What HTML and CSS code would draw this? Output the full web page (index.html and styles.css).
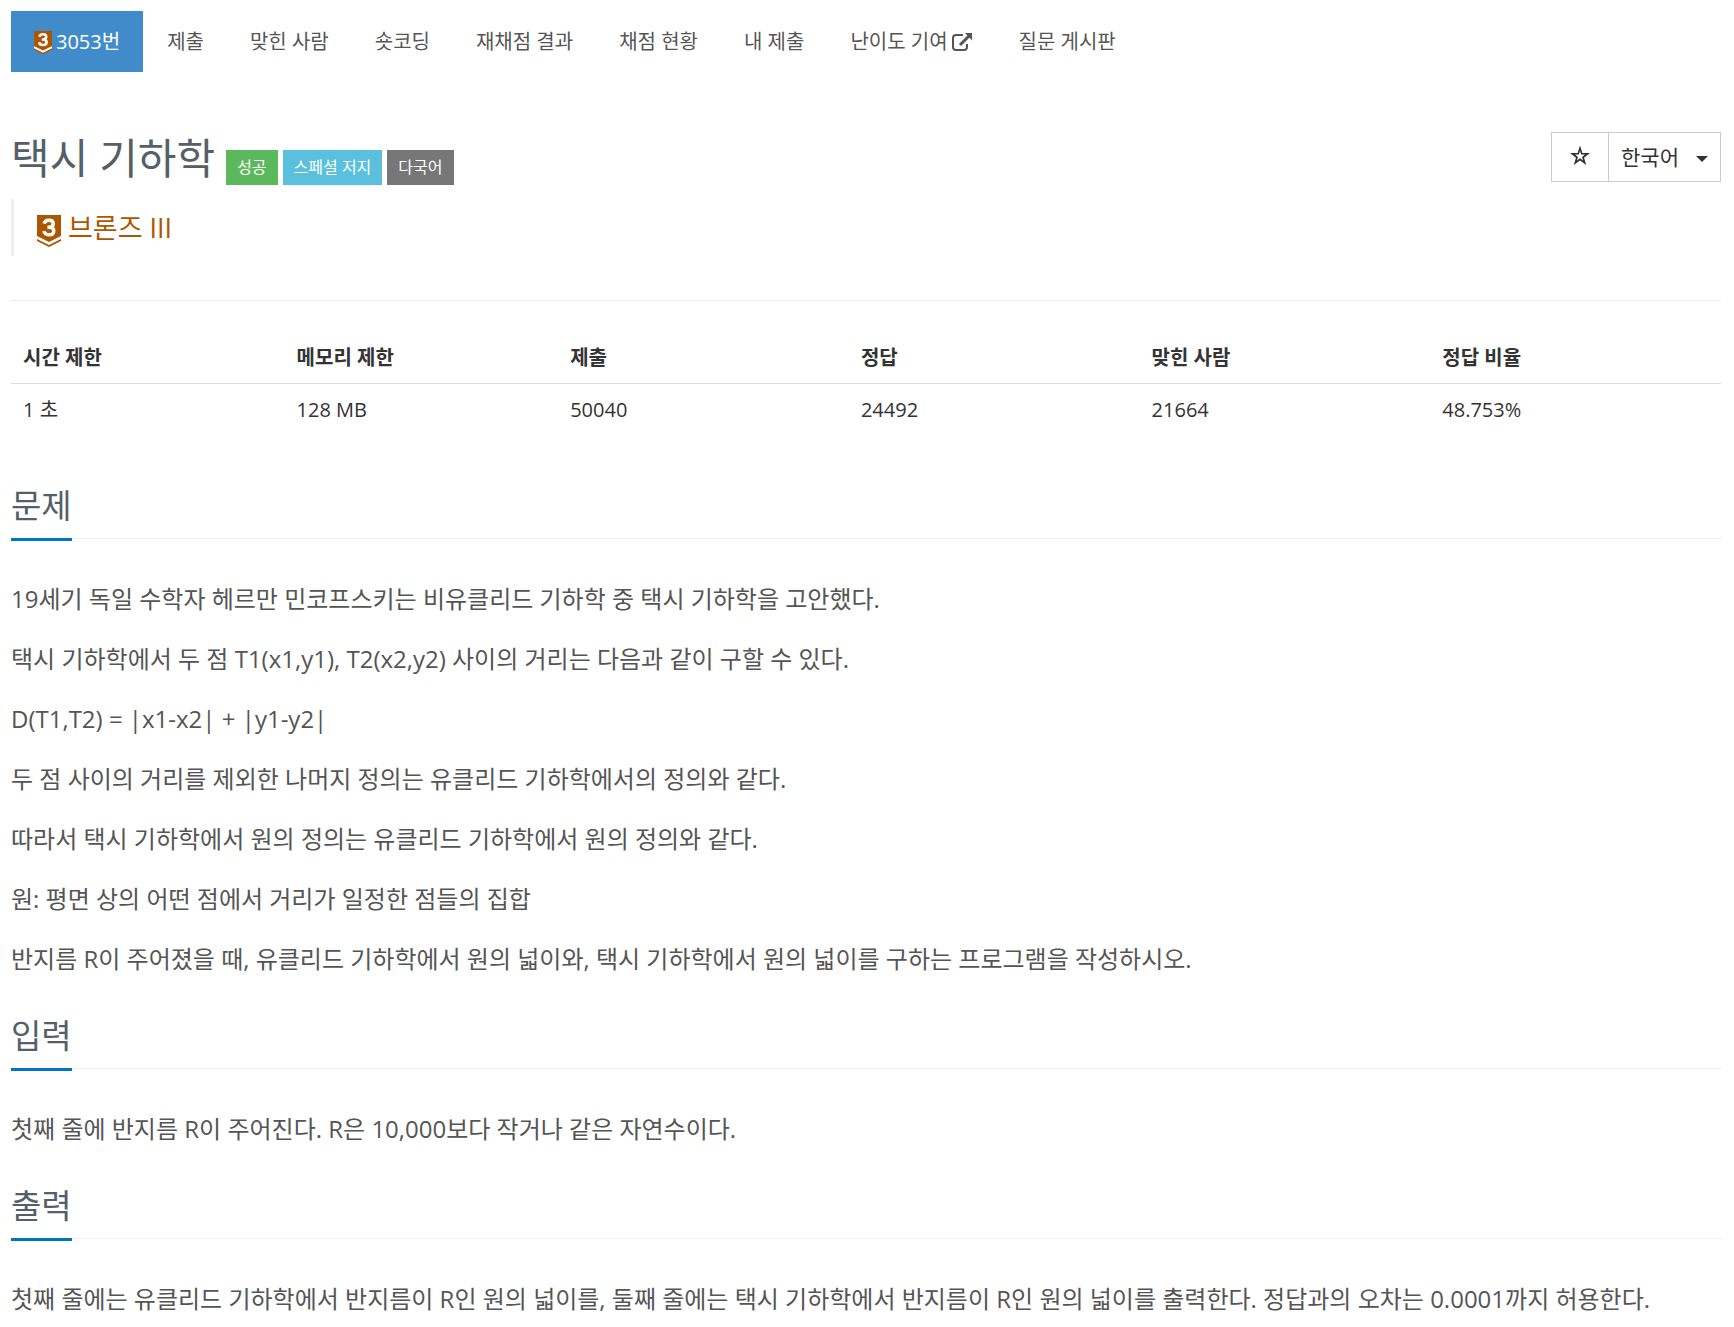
FILE: index.html
```html
<!DOCTYPE html>
<html lang="ko">
<head>
	<meta charset="utf-8">
	<title>3053번: 택시 기하학</title>
	<link rel="stylesheet" href="styles.css">
</head>
<body>
	<svg class="defs" width="0" height="0">
		<symbol id="tier" viewBox="0 0 24 32">
			<path fill="#ad5600" d="M0 0H24V21L12 27L0 21Z"/>
			<path fill="#ad5600" d="M0 24L12 30L24 24V26L12 32L0 26Z"/>
			<path fill="none" stroke="#fff" stroke-width="3.400" d="M7.200 8.600C7.600 6.300 9.500 5.300 12 5.300C14.700 5.300 16.300 6.600 16.300 8.800C16.300 11 14.600 12.200 12.200 12.200H10.400M12.200 12.200C15 12.200 16.800 13.400 16.800 15.900C16.800 18.300 14.800 19.700 12 19.700C9.200 19.700 7.300 18.500 6.900 16"/>
		</symbol>
		<symbol id="tier-filled" viewBox="0 0 24 32">
			<path fill="#ad5600" d="M0 0H24V25L12 31L0 25Z"/>
			<path fill="none" stroke="#fff" stroke-width="2.500" d="M0 21.500L12 27.500L24 21.500"/>
			<path fill="none" stroke="#fff" stroke-width="3.400" d="M7.200 7.600C7.600 5.300 9.500 4.300 12 4.300C14.700 4.300 16.300 5.600 16.300 7.800C16.300 10 14.600 11.200 12.200 11.200H10.400M12.200 11.200C15 11.200 16.800 12.400 16.800 14.900C16.800 17.300 14.800 18.700 12 18.700C9.200 18.700 7.300 17.500 6.900 15"/>
		</symbol>
	</svg>
	<nav>
		<ul class="problem-menu">
			<li class="active"><a href="#"><svg class="tier-small"><use href="#tier-filled"/></svg>3053번</a></li>
			<li><a href="#">제출</a></li>
			<li><a href="#">맞힌 사람</a></li>
			<li><a href="#">숏코딩</a></li>
			<li><a href="#">재채점 결과</a></li>
			<li><a href="#">채점 현황</a></li>
			<li><a href="#">내 제출</a></li>
			<li><a href="#">난이도 기여<svg class="external" viewBox="0 0 21 18"><path fill="none" stroke="currentColor" stroke-width="2" d="M11 2H4Q1 2 1 5V14Q1 17 4 17H12Q15 17 15 14V11"/><path fill="none" stroke="currentColor" stroke-width="3" d="M8 12L17 3"/><path fill="currentColor" d="M13 0H20V7.500Z"/></svg></a></li>
			<li><a href="#">질문 게시판</a></li>
		</ul>
	</nav>
	<header class="page-header">
		<div class="title">
			<h1>택시 기하학</h1>
			<span class="label success">성공</span>
			<span class="label info">스페셜 저지</span>
			<span class="label default">다국어</span>
		</div>
		<div class="btn-group">
			<button class="btn" aria-label="즐겨찾기"><svg class="star" viewBox="0 0 22 22"><path fill="#333" fill-rule="evenodd" d="M11 .5L13.400 8H21L15 12.700L17.300 20L11 15.600L4.700 20L7 12.700L1 8H8.600ZM11 5.800L9.900 9.600H6L9 11.900L7.900 15.400L11 13.300L14.100 15.400L13 11.900L16 9.600H12.100Z"/></svg></button>
			<button class="btn">한국어<span class="caret"></span></button>
		</div>
	</header>
	<blockquote class="tier"><svg class="tier-large"><use href="#tier"/></svg>브론즈 III</blockquote>
	<hr>
	<table id="problem-info">
		<thead>
			<tr>
				<th class="narrow">시간 제한</th>
				<th class="narrow">메모리 제한</th>
				<th>제출</th>
				<th>정답</th>
				<th>맞힌 사람</th>
				<th>정답 비율</th>
			</tr>
		</thead>
		<tbody>
			<tr>
				<td>1 초</td>
				<td>128 MB</td>
				<td>50040</td>
				<td>24492</td>
				<td>21664</td>
				<td>48.753%</td>
			</tr>
		</tbody>
	</table>
	<section>
		<div class="headline"><h2>문제</h2></div>
		<p>19세기 독일 수학자 헤르만 민코프스키는 비유클리드 기하학 중 택시 기하학을 고안했다.</p>
		<p>택시 기하학에서 두 점 T1(x1,y1), T2(x2,y2) 사이의 거리는 다음과 같이 구할 수 있다.</p>
		<p>D(T1,T2) = |x1-x2| + |y1-y2|</p>
		<p>두 점 사이의 거리를 제외한 나머지 정의는 유클리드 기하학에서의 정의와 같다.</p>
		<p>따라서 택시 기하학에서 원의 정의는 유클리드 기하학에서 원의 정의와 같다.</p>
		<p>원: 평면 상의 어떤 점에서 거리가 일정한 점들의 집합</p>
		<p>반지름 R이 주어졌을 때, 유클리드 기하학에서 원의 넓이와, 택시 기하학에서 원의 넓이를 구하는 프로그램을 작성하시오.</p>
	</section>
	<section>
		<div class="headline"><h2>입력</h2></div>
		<p>첫째 줄에 반지름 R이 주어진다. R은 10,000보다 작거나 같은 자연수이다.</p>
	</section>
	<section>
		<div class="headline"><h2>출력</h2></div>
		<p>첫째 줄에는 유클리드 기하학에서 반지름이 R인 원의 넓이를, 둘째 줄에는 택시 기하학에서 반지름이 R인 원의 넓이를 출력한다. 정답과의 오차는 0.0001까지 허용한다.</p>
	</section>
</body>
</html>
```
FILE: styles.css
```css
* {
	box-sizing: border-box;
}
body {
	margin: 0;
	padding: 11px 13px 0 11px;
	background: #fff;
	color: #333;
	font-family: "Open Sans", "Noto Sans CJK KR", sans-serif;
	font-size: 20px;
	line-height: 28px;
}
.defs {
	position: absolute;
}
a {
	color: #555;
	text-decoration: none;
}
.problem-menu {
	display: flex;
	gap: 2px;
	margin: 0;
	padding: 0;
	list-style: none;
}
.problem-menu a {
	display: flex;
	align-items: center;
	height: 61px;
	padding: 0 22px;
}
.problem-menu .active a {
	padding: 0 23px;
	background: #428bca;
	color: #fff;
}
.tier-small {
	width: 18px;
	height: 24px;
	margin: 3px 4px 0 0;
}
.external {
	width: 21px;
	height: 18px;
	margin-left: 4px;
}
.page-header {
	display: flex;
	justify-content: space-between;
	align-items: flex-start;
	margin-top: 60px;
}
.title {
	display: flex;
	align-items: flex-end;
	gap: 5px;
}
h1 {
	margin: 0 6px 0 0;
	padding-bottom: 2px;
	color: #555f69;
	font-size: 42px;
	font-weight: 400;
	line-height: 51px;
}
.label {
	padding: 0 11px;
	color: #fff;
	font-size: 16px;
	line-height: 35px;
}
.success {
	background: #5cb85c;
}
.info {
	background: #5bc0de;
}
.default {
	background: #777;
}
.btn-group {
	display: flex;
}
.btn {
	display: flex;
	align-items: center;
	height: 50px;
	padding: 0 12px 2px;
	border: 1px solid #ccc;
	background: #fff;
	color: #333;
	font-family: inherit;
	font-size: 21px;
}
.btn:first-child {
	padding: 0 17px 2px;
	border-right: none;
}
.star {
	width: 22px;
	height: 22px;
}
.caret {
	margin: 5px 0 0 17px;
	border: 6px solid transparent;
	border-top-color: #333;
	border-bottom: none;
}
.tier {
	display: flex;
	align-items: center;
	height: 57px;
	margin: 14px 0 44px;
	padding-left: 23px;
	border-left: 3px solid #eee;
	color: #ad5600;
	font-size: 27px;
}
.tier-large {
	width: 24px;
	height: 32px;
	margin: 6px 7px 0 0;
}
hr {
	margin: 0 0 31px;
	border: 0;
	border-top: 1px solid #eee;
}
#problem-info {
	width: 100%;
	table-layout: fixed;
	border-spacing: 0;
	margin-bottom: 45px;
}
th, td {
	padding: 12px;
	text-align: left;
}
th {
	padding-bottom: 11px;
	border-bottom: 1px solid #ddd;
}
.narrow {
	width: 16%;
}
.headline {
	margin: 30px 0 37px;
	border-bottom: 1px dotted #e4e9f0;
}
h2 {
	width: fit-content;
	margin: 0 0 -3px;
	padding-bottom: 7px;
	border-bottom: 3px solid #0076c0;
	color: #555f69;
	font-size: 33px;
	font-weight: 400;
	line-height: 50px;
}
p {
	margin: 0 0 15px;
	color: #555;
	font-size: 24px;
	line-height: 45px;
}
```
